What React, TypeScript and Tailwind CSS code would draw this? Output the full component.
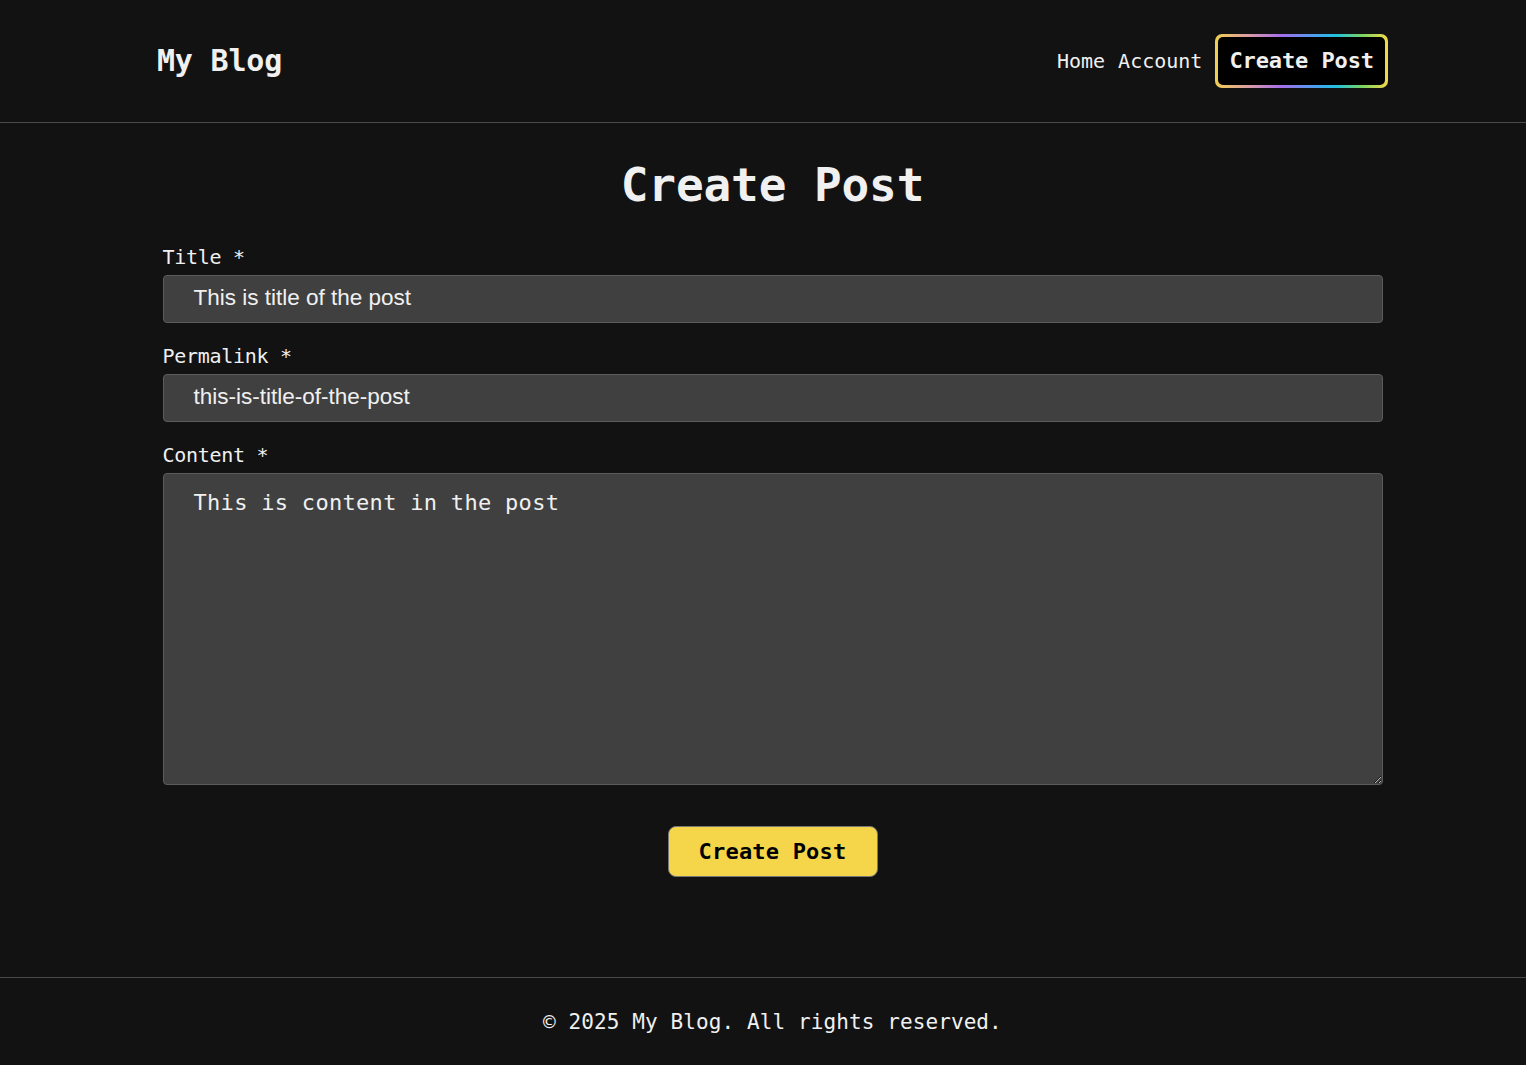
import React from "react";

const mono = "font-['DejaVu_Sans_Mono','Liberation_Mono',monospace]";

export default function App() {
  return (
    <div className={`min-h-[1065px] bg-[#121212] text-[#f0f0f0] ${mono} flex flex-col`}>
      <header className="h-[123px] border-b border-[#4a4a4a] pl-[19px]">
        <div className="mx-auto flex h-full w-[1231px] items-center justify-between">
          <h1 className="text-[30px] font-bold leading-none tracking-[-0.2px]">My Blog</h1>
          <nav className="flex items-center gap-[13px] text-[20px]">
            <a className="leading-7">Home</a>
            <a className="leading-7">Account</a>
            <div className="rounded-[7px] bg-[linear-gradient(90deg,#f0d050,#d99aa8_20%,#a56ee8_38%,#4aa0f0_58%,#22c0e0_70%,#7ad460_85%,#f5d84a)] p-[3px]">
              <div className="rounded-[5px] bg-black px-[11px] py-[10px] text-[22px] font-bold leading-7 tracking-[-0.1px]">
                Create Post
              </div>
            </div>
          </nav>
        </div>
      </header>

      <main className="flex-1 pl-[19px]">
        <div className="mx-auto w-[1220px] pt-[34px]">
          <h2 className="text-center text-[46px] font-bold leading-[56px] tracking-[-0.1px]">Create Post</h2>

          <div className="mt-[30px]">
            <label className="block text-[20px] leading-7 tracking-[-0.3px]">Title *</label>
            <div className="mt-[4px] flex h-[48px] items-center rounded-[4px] border border-[#5c5c5c] bg-[#404040] pb-[3px] pl-[30px] font-['Liberation_Sans',Arial,sans-serif] text-[22.5px]">
              This is title of the post
            </div>
          </div>

          <div className="mt-[19px]">
            <label className="block text-[20px] leading-7 tracking-[-0.3px]">Permalink *</label>
            <div className="mt-[4px] flex h-[48px] items-center rounded-[4px] border border-[#5c5c5c] bg-[#404040] pb-[3px] pl-[30px] font-['Liberation_Sans',Arial,sans-serif] text-[22.5px]">
              this-is-title-of-the-post
            </div>
          </div>

          <div className="mt-[19px]">
            <label className="block text-[20px] leading-7 tracking-[-0.3px]">Content *</label>
            <textarea
              readOnly
              defaultValue="This is content in the post"
              className="mt-[4px] block h-[312px] w-full resize-y rounded-[4px] border border-[#5c5c5c] bg-[#404040] px-[30px] pt-[15px] text-[22px] leading-7 tracking-[0.3px] text-[#f0f0f0] outline-none"
            />
          </div>

          <div className="mt-[41px] flex justify-center pb-[100px]">
            <button className="h-[51px] w-[210px] rounded-[8px] border border-[#777] bg-[#f5d54a] text-[22px] font-bold tracking-[0.2px] text-black">
              Create Post
            </button>
          </div>
        </div>
      </main>

      <footer className="h-[88px] border-t border-[#4a4a4a] pl-[19px]">
        <div className="flex h-full items-center justify-center pt-[2px] text-[21px] tracking-[0.1px]">
          © 2025 My Blog. All rights reserved.
        </div>
      </footer>
    </div>
  );
}
